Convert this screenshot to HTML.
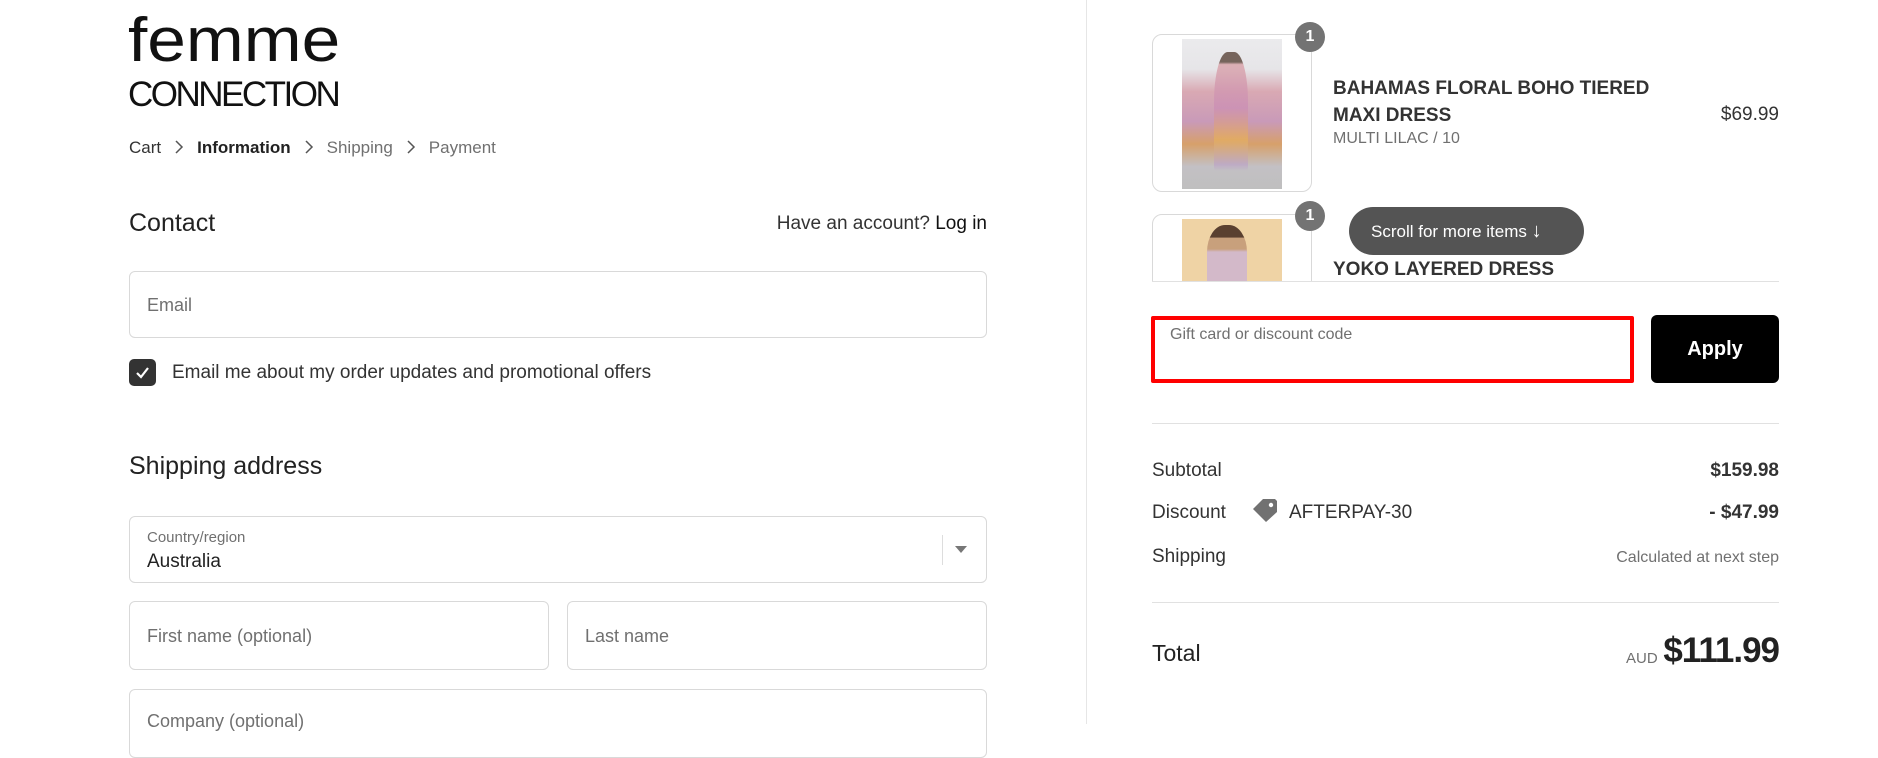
<!DOCTYPE html>
<html><head><meta charset="utf-8">
<style>
*{box-sizing:border-box;margin:0;padding:0}
body{width:1878px;height:724px;overflow:hidden;background:#fff;font-family:"Liberation Sans",sans-serif;color:#333;position:relative}
.a{position:absolute;white-space:nowrap}
.inp{position:absolute;border:1px solid #d9d9d9;border-radius:6px;background:#fff}
.ph{position:absolute;color:#707070;font-size:18px}
.hr{position:absolute;height:1px;background:#e1e1e1}
.chev{display:inline-block;width:10px;height:14px;margin:0 13px;vertical-align:-1px}
</style></head><body>
<div class="a" style="left:128px;top:8px;font-size:62px;letter-spacing:0;color:#111;line-height:66px;transform:scaleX(1.12);transform-origin:left">femme</div>
<div class="a" style="left:128px;top:78px;font-size:35px;letter-spacing:-2.5px;color:#111;line-height:34px">CONNECTION</div>

<div class="a" style="left:129px;top:138px;font-size:17px;color:#333">Cart<svg class="chev" viewBox="0 0 10 14"><path d="M2 1 L8 7 L2 13" stroke="#555" stroke-width="1.5" fill="none"/></svg><b style="color:#222">Information</b><svg class="chev" viewBox="0 0 10 14"><path d="M2 1 L8 7 L2 13" stroke="#555" stroke-width="1.5" fill="none"/></svg><span style="color:#707070">Shipping</span><svg class="chev" viewBox="0 0 10 14"><path d="M2 1 L8 7 L2 13" stroke="#555" stroke-width="1.5" fill="none"/></svg><span style="color:#707070">Payment</span></div>

<div class="a" style="left:129px;top:209px;font-size:25px;color:#222">Contact</div>
<div class="a" style="right:891px;top:213px;font-size:19px;color:#333">Have an account? <span style="color:#111">Log in</span></div>

<div class="inp" style="left:129px;top:271px;width:858px;height:67px"></div>
<div class="ph" style="left:147px;top:295px">Email</div>

<div class="a" style="left:129px;top:359px;width:27px;height:27px;background:#333;border-radius:5px"></div>
<svg class="a" style="left:129px;top:359px" width="27" height="27"><path d="M8 14 l4 4 l7-9" stroke="#fff" stroke-width="2.2" fill="none"/></svg>
<div class="a" style="left:172px;top:362px;font-size:19px;color:#333">Email me about my order updates and promotional offers</div>

<div class="a" style="left:129px;top:452px;font-size:25px;color:#222">Shipping address</div>

<div class="inp" style="left:129px;top:516px;width:858px;height:67px"></div>
<div class="a" style="left:147px;top:529px;font-size:15px;color:#707070">Country/region</div>
<div class="a" style="left:147px;top:551px;font-size:19px;color:#222">Australia</div>
<div class="a" style="left:942px;top:535px;width:1px;height:30px;background:#ddd"></div>
<svg class="a" style="left:953px;top:545px" width="16" height="10"><path d="M2 1 L14 1 L8 8Z" fill="#777"/></svg>

<div class="inp" style="left:129px;top:601px;width:420px;height:69px"></div>
<div class="ph" style="left:147px;top:626px">First name (optional)</div>
<div class="inp" style="left:567px;top:601px;width:420px;height:69px"></div>
<div class="ph" style="left:585px;top:626px">Last name</div>
<div class="inp" style="left:129px;top:689px;width:858px;height:69px"></div>
<div class="ph" style="left:147px;top:711px">Company (optional)</div>

<div class="a" style="left:1086px;top:0;width:1px;height:724px;background:#e6e6e6"></div>

<div style="position:absolute;left:1152px;top:0;width:627px;height:282px;overflow:hidden">
 <div class="inp" style="left:0;top:34px;width:160px;height:158px;border-radius:10px"></div>
 <div class="a" style="left:30px;top:39px;width:100px;height:150px;background:linear-gradient(180deg,#ebebed 0%,#e6e5e8 20%,#d9a9b3 35%,#c99ab8 55%,#d7a06a 70%,#c3c0c4 85%,#bfbfbf 100%)"></div>
 <div class="a" style="left:62px;top:52px;width:34px;height:125px;background:linear-gradient(180deg,#5a4338 0 8%,#d9a2a8 10%,#cb8fb5 45%,#e4ad5e 70%,#bca6c6 90%,transparent 95%);border-radius:40% 40% 10% 10%;opacity:.8"></div>
 <div class="a" style="left:143px;top:22px;width:30px;height:30px;border-radius:50%;background:#737373;color:#fff;font-size:16px;font-weight:bold;text-align:center;line-height:30px">1</div>
 <div class="a" style="left:181px;top:75px;font-size:19px;font-weight:bold;color:#333;line-height:27px">BAHAMAS FLORAL BOHO TIERED<br>MAXI DRESS</div>
 <div class="a" style="left:181px;top:130px;font-size:16px;color:#707070">MULTI LILAC / 10</div>
 <div class="a" style="right:0;top:104px;font-size:19px;color:#333">$69.99</div>

 <div class="inp" style="left:0;top:214px;width:160px;height:158px;border-radius:10px"></div>
 <div class="a" style="left:30px;top:219px;width:100px;height:70px;background:#efd3a5"></div>
 <div class="a" style="left:55px;top:225px;width:40px;height:60px;background:linear-gradient(180deg,#5a4030 0 20%,#c8a07c 22% 40%,#d3b9c9 45%);border-radius:45% 45% 5% 5%"></div>
 <div class="a" style="left:143px;top:201px;width:30px;height:30px;border-radius:50%;background:#737373;color:#fff;font-size:16px;font-weight:bold;text-align:center;line-height:30px">1</div>
 <div class="a" style="left:181px;top:259px;font-size:19px;font-weight:bold;color:#333">YOKO LAYERED DRESS</div>
 <div class="a" style="left:197px;top:207px;width:235px;height:48px;border-radius:24px;background:#545454;color:#fff;font-size:17px;line-height:48px;padding-left:22px">Scroll for more items <span style="font-size:20px">&#x2193;</span></div>
</div>
<div class="hr" style="left:1152px;top:281px;width:627px"></div>

<div class="a" style="left:1151px;top:316px;width:483px;height:67px;border:4px solid #f00;border-radius:2px"></div>
<div class="a" style="left:1170px;top:326px;font-size:16px;color:#707070">Gift card or discount code</div>
<div class="a" style="left:1651px;top:315px;width:128px;height:68px;background:#000;border-radius:6px;color:#fff;font-size:20px;font-weight:bold;text-align:center;line-height:68px">Apply</div>

<div class="hr" style="left:1152px;top:423px;width:627px"></div>

<div class="a" style="left:1152px;top:460px;font-size:19px;color:#333">Subtotal</div>
<div class="a" style="right:99px;top:460px;font-size:19px;font-weight:bold;color:#333">$159.98</div>
<div class="a" style="left:1152px;top:502px;font-size:19px;color:#333">Discount</div>
<svg class="a" style="left:1251px;top:497px" width="28" height="26"><path d="M2 12 L12 2 L24 2 L26 4 L26 15 L15 25 Z" fill="#717171"/><circle cx="20" cy="8" r="2.2" fill="#fff"/></svg>
<div class="a" style="left:1289px;top:502px;font-size:19px;color:#333">AFTERPAY-30</div>
<div class="a" style="right:99px;top:502px;font-size:19px;font-weight:bold;color:#333">- $47.99</div>
<div class="a" style="left:1152px;top:546px;font-size:19px;color:#333">Shipping</div>
<div class="a" style="right:99px;top:549px;font-size:16px;color:#707070">Calculated at next step</div>

<div class="hr" style="left:1152px;top:602px;width:627px"></div>

<div class="a" style="left:1152px;top:640px;font-size:23px;color:#222">Total</div>
<div class="a" style="left:1626px;top:650px;font-size:15px;color:#707070">AUD</div>
<div class="a" style="right:99px;top:631px;font-size:35px;font-weight:bold;color:#222;letter-spacing:-1px">$111.99</div>
</body></html>
